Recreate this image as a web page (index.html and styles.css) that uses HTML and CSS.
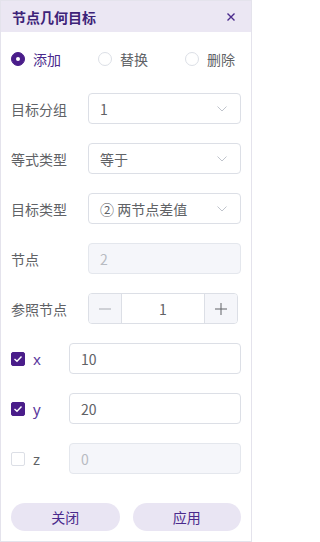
FILE: index.html
```html
<!DOCTYPE html>
<html lang="zh">
<head>
<meta charset="utf-8">
<link rel="stylesheet" href="styles.css">
</head>
<body>
<div class="win">
  <div class="head">
    <span class="title">节点几何目标</span>
    <svg class="close" width="10" height="10" viewBox="0 0 10 10"><path d="M1.5 1.5 L8.5 8.5 M8.5 1.5 L1.5 8.5" stroke="#4a2a8c" stroke-width="1.4" fill="none"/></svg>
  </div>
  <div class="body">
    <div class="radios">
      <label class="radio on"><span class="dot"></span>添加</label>
      <label class="radio"><span class="dot"></span>替换</label>
      <label class="radio"><span class="dot"></span>删除</label>
    </div>
    <div class="form">
      <div class="row">
        <span class="lab">目标分组</span>
        <div class="field sel"><span>1</span><svg class="chev" width="10" height="6" viewBox="0 0 10 6"><path d="M0.5 0.5 L5 5 L9.5 0.5" stroke="#c0c4cc" stroke-width="1" fill="none"/></svg></div>
      </div>
      <div class="row">
        <span class="lab">等式类型</span>
        <div class="field sel"><span>等于</span><svg class="chev" width="10" height="6" viewBox="0 0 10 6"><path d="M0.5 0.5 L5 5 L9.5 0.5" stroke="#c0c4cc" stroke-width="1" fill="none"/></svg></div>
      </div>
      <div class="row">
        <span class="lab">目标类型</span>
        <div class="field sel"><span>② 两节点差值</span><svg class="chev" width="10" height="6" viewBox="0 0 10 6"><path d="M0.5 0.5 L5 5 L9.5 0.5" stroke="#c0c4cc" stroke-width="1" fill="none"/></svg></div>
      </div>
      <div class="row">
        <span class="lab">节点</span>
        <div class="field dis"><span>2</span></div>
      </div>
      <div class="row">
        <span class="lab">参照节点</span>
        <div class="step">
          <span class="btn"><svg width="14" height="14" viewBox="0 0 14 14"><path d="M1 7 H13" stroke="#a8abb2" stroke-width="1"/></svg></span>
          <span class="num">1</span>
          <span class="btn"><svg width="14" height="14" viewBox="0 0 14 14"><path d="M1 7 H13 M7 1 V13" stroke="#606266" stroke-width="1"/></svg></span>
        </div>
      </div>
      <div class="row">
        <label class="chk on"><span class="box"><svg width="10" height="8" viewBox="0 0 10 8"><path d="M1.5 4 L4 6.3 L8.5 1.5" stroke="#fff" stroke-width="1.4" fill="none"/></svg></span>x</label>
        <div class="field"><span>10</span></div>
      </div>
      <div class="row">
        <label class="chk on"><span class="box"><svg width="10" height="8" viewBox="0 0 10 8"><path d="M1.5 4 L4 6.3 L8.5 1.5" stroke="#fff" stroke-width="1.4" fill="none"/></svg></span>y</label>
        <div class="field"><span>20</span></div>
      </div>
      <div class="row">
        <label class="chk"><span class="box"></span>z</label>
        <div class="field dis"><span>0</span></div>
      </div>
    </div>
    <div class="actions">
      <button class="pill">关闭</button>
      <button class="pill">应用</button>
    </div>
  </div>
</div>
</body>
</html>
```
FILE: styles.css
```css
* { box-sizing: border-box; }
html, body { margin: 0; padding: 0; background: #fff; }
body { font-family: "Noto Sans CJK SC", "Noto Sans", sans-serif; font-size: 14px; color: #606266; }
.win { width: 252px; height: 542px; border: 1px solid #e4e3ec; background: #fff; display: flex; flex-direction: column; }
.head { height: 31px; background: #ebe7f3; display: flex; align-items: center; justify-content: space-between; padding: 0 15px 0 11px; }
.title { font-weight: bold; font-size: 14px; color: #3d2378; line-height: 1; }
.close { display: block; }
.body { padding: 0 10px 0 10px; display: flex; flex-direction: column; }
.radios { margin-top: 20px; height: 14px; display: flex; justify-content: flex-start; align-items: center; gap: 37px; }
.radio { display: flex; align-items: center; gap: 8px; line-height: 14px; color: #606266; }
.radio.on { color: #4a2a8c; }
.dot { width: 14px; height: 14px; border-radius: 50%; border: 1px solid #dcdfe6; background: #fff; display: inline-block; position: relative; }
.radio.on .dot { background: #4a1d8a; border-color: #4a1d8a; }
.radio.on .dot::after { content: ""; position: absolute; left: 4px; top: 4px; width: 4px; height: 4px; border-radius: 50%; background: #fff; }
.form { margin-top: 27px; display: flex; flex-direction: column; gap: 19px; }
.row { height: 31px; display: flex; align-items: center; }
.lab { width: 77px; flex: none; }
.field { flex: 1; height: 31px; border: 1px solid #dcdfe6; border-radius: 4px; display: flex; align-items: center; justify-content: space-between; padding: 0 12px 0 11px; color: #606266; }
.field.dis { background: #f5f6fa; border-color: #e4e7ed; color: #b8bbc2; }
.chev { display: block; }
.sel { padding-right: 13px; }
.step { width: 150px; height: 31px; display: flex; border: 1px solid #dcdfe6; border-radius: 4px; overflow: hidden; }
.step .btn { width: 33px; flex: none; background: #f5f6fa; display: flex; align-items: center; justify-content: center; }
.step .btn:first-child { border-right: 1px solid #dcdfe6; }
.step .btn:last-child { border-left: 1px solid #dcdfe6; }
.num { flex: 1; display: flex; align-items: center; justify-content: center; color: #606266; }
.chk { width: 58px; flex: none; display: flex; align-items: center; gap: 8px; color: #606266; font-family: "Noto Sans", sans-serif; font-size: 15px; }
.chk.on { color: #5b3a9e; }
.box { width: 14px; height: 14px; border: 1px solid #dcdfe6; border-radius: 2px; background: #fff; display: flex; align-items: center; justify-content: center; }
.chk.on .box { background: #4a1d8a; border-color: #4a1d8a; }
.actions { margin-top: 29px; display: flex; gap: 13px; }
.pill { flex: 1; height: 28px; border: none; border-radius: 14px; background: #e9e5f3; color: #4a2a8c; font-family: "Noto Sans CJK SC", sans-serif; font-size: 14px; padding: 0; }
```
